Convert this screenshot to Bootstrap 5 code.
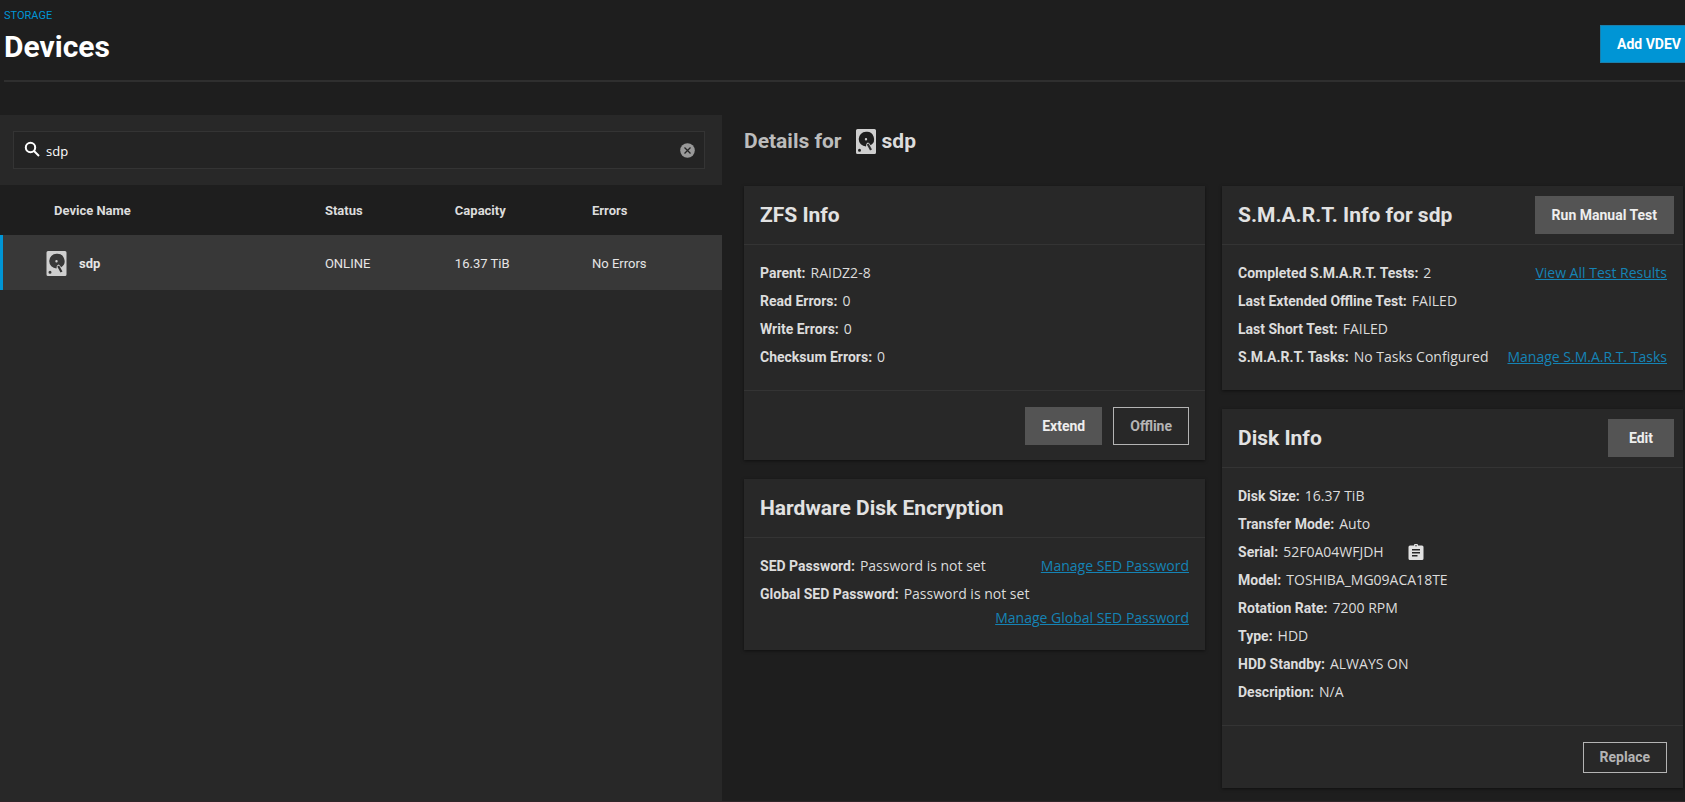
<!doctype html>
<html lang="en">
<head>
<meta charset="utf-8">
<meta name="viewport" content="width=device-width, initial-scale=1">
<title>Devices</title>
<link href="https://cdn.jsdelivr.net/npm/bootstrap@5.3.0/dist/css/bootstrap.min.css" rel="stylesheet">
<style>
  :root { --page: #1e1e1e; --panel: #282828; --line: #343434; --accent: #0095d5; --ink: #dcdcdc; --strong-font: Roboto, "Liberation Sans", sans-serif; }
  body { background: var(--page); color: var(--ink); font: 14px/28px "Open Sans", "Liberation Sans", sans-serif; }
  h1, h2, h3, .strong, .btn, th { font-family: var(--strong-font); font-weight: 700; }
  svg { display: block; flex: none; }
  .shell { min-height: 100vh; border-bottom: 1px solid #2f2529; }

  .page-head { border-bottom: 2px solid #2f2f2f; padding-top: 9px; height: 82px; }
  .crumb { color: var(--accent); font: 11px/14px var(--strong-font); text-decoration: none; display: block; }
  h1 { font-size: 30px; line-height: 36px; color: #fff; margin: 6px 0 0; }

  .btn { --bs-btn-font-size: 14px; --bs-btn-line-height: 20px; --bs-btn-padding-y: 8px; --bs-btn-padding-x: 16px; --bs-btn-border-radius: 0; --bs-btn-font-weight: 700; }
  .btn-main { --bs-btn-bg: var(--accent); --bs-btn-color: #fff; --bs-btn-border-color: #1b7fac; --bs-btn-hover-bg: #0aa5e8; --bs-btn-hover-color: #fff; }
  .btn-grey { --bs-btn-bg: #545454; --bs-btn-color: #eee; --bs-btn-border-color: #545454; --bs-btn-hover-bg: #666; --bs-btn-hover-color: #fff; }
  .btn-line { --bs-btn-color: #b4b4b4; --bs-btn-border-color: #b4b4b4; --bs-btn-hover-bg: #3a3a3a; --bs-btn-hover-color: #fff; }
  .btn-short { --bs-btn-line-height: 21px; --bs-btn-padding-y: 4px; }
  .btn-edit { --bs-btn-padding-x: 20px; }

  .main-area { padding-top: 33px; }
  .list-side { flex: 0 0 42.85%; max-width: 42.85%; background: var(--panel); }
  .search-zone { padding: 16px 17px 16px 13px; }
  .search-box { height: 38px; border: 1px solid var(--line); background: #242424; padding: 0 9px 0 10px; }
  .search-box input { font: 13px/20px "Open Sans", sans-serif; color: #fff; background: none; border: 0; outline: 0; min-width: 0; padding: 2px 0 0 4px; }
  .clear-btn { background: none; border: 0; padding: 0; }

  .device-table { width: 100%; table-layout: fixed; border-collapse: separate; border-spacing: 0; font: 13px/20px var(--strong-font); }
  .device-table th { background: var(--page); height: 50px; color: var(--ink); padding: 2px 0 0; }
  .device-table td { background: #383838; height: 55px; color: #e6e6e6; padding: 2px 0 0; }
  .device-table th:first-child { padding-left: 54px; }
  .device-table td:first-child { padding-left: 43px; border-left: 3px solid var(--accent); }

  .detail-side { padding: 0 2px 0 22px; }
  .detail-title { font-size: 21px; line-height: 28px; margin: 12px 0 31px; color: #bcbcbc; }
  .detail-title span { color: var(--ink); }
  .detail-cols { gap: 17px; }
  .detail-col { flex: 1 1 0; min-width: 0; gap: 19px; }
  .tile { background: var(--panel); box-shadow: 0 1px 3px rgba(0,0,0,.5); }
  .tile-head { height: 59px; padding: 0 9px 0 16px; border-bottom: 1px solid var(--line); }
  .tile-head h3 { font-size: 21px; line-height: 28px; margin: 0; color: #e2e2e2; }
  .tile-body { padding: 14px 16px 19px; }
  .tile-foot { border-top: 1px solid var(--line); padding: 16px 16px 15px; gap: 11px; }
  .strong { margin-right: 5px; }
  .tile-body a { color: #1583b5; }
  .link-row { line-height: 20px; padding-bottom: 3px; }
</style>
</head>
<body>
<svg width="0" height="0" class="position-absolute" aria-hidden="true">
  <symbol id="disk" viewBox="0 0 20 25">
    <path fill="#cfcfcf" fill-rule="evenodd" d="M1.500 0h17A1.500 1.500 0 0 1 20 1.500v22a1.500 1.500 0 0 1-1.500 1.500h-17A1.500 1.500 0 0 1 0 23.500v-22A1.500 1.500 0 0 1 1.500 0zM10 2.800a7.300 7.300 0 1 0 0 14.600l.3-2.500 1.500-1.300 1.200.3 1.700 2.300A7.300 7.300 0 0 0 10 2.800zm0 6.300a1.200 1.200 0 1 1 0 2.400 1.200 1.200 0 0 1 0-2.400zM3.500 19.700a1.500 1.500 0 1 0 0 3 1.500 1.500 0 0 0 0-3z"/>
    <path stroke="#303030" stroke-width="2.200" d="M11.700 15l3.300 6"/>
  </symbol>
</svg>
<div class="shell d-flex flex-column">
  <header class="page-head d-flex justify-content-between align-items-start ms-1">
    <div>
      <a class="crumb" href="#">STORAGE</a>
      <h1>Devices</h1>
    </div>
    <div class="pt-3"><button class="btn btn-main pe-1 border-end-0" type="button">Add VDEV</button></div>
  </header>

  <main class="main-area d-flex flex-grow-1">
    <section class="list-side">
      <div class="search-zone">
        <div class="search-box d-flex align-items-center">
          <svg width="18" height="18" viewBox="0 0 18 18" fill="none" stroke="#fff" stroke-width="2" aria-hidden="true"><circle cx="6.500" cy="6.500" r="4.700"/><path d="M10 10l5 5"/></svg>
          <input class="flex-grow-1" type="text" value="sdp" aria-label="Search devices">
          <button class="clear-btn" type="button" aria-label="Clear search"><svg width="15" height="15" viewBox="0 0 15 15"><circle cx="7.500" cy="7.500" r="7.300" fill="#999"/><path d="M4.500 4.500l6 6m0-6l-6 6" stroke="#242424" stroke-width="1.300"/></svg></button>
        </div>
      </div>
      <table class="device-table">
        <colgroup><col style="width:45%"><col style="width:18%"><col style="width:19%"><col style="width:18%"></colgroup>
        <thead><tr><th>Device Name</th><th>Status</th><th>Capacity</th><th>Errors</th></tr></thead>
        <tbody><tr>
          <td><div class="d-flex align-items-center"><svg width="21" height="25" aria-hidden="true" preserveAspectRatio="none"><use href="#disk"/></svg><b class="ms-2 ps-1">sdp</b></div></td>
          <td>ONLINE</td><td>16.37 TiB</td><td>No Errors</td>
        </tr></tbody>
      </table>
    </section>

    <section class="detail-side flex-grow-1">
      <h2 class="detail-title d-flex align-items-center">Details for <svg class="ms-2 me-1 ps-1" width="28" height="25" aria-hidden="true"><use href="#disk"/></svg> <span>sdp</span></h2>
      <div class="detail-cols d-flex align-items-start">
        <div class="detail-col d-flex flex-column">
          <article class="tile">
            <div class="tile-head d-flex align-items-center"><h3>ZFS Info</h3></div>
            <div class="tile-body">
              <div><span class="strong">Parent:</span>RAIDZ2-8</div>
              <div><span class="strong">Read Errors:</span>0</div>
              <div><span class="strong">Write Errors:</span>0</div>
              <div><span class="strong">Checksum Errors:</span>0</div>
            </div>
            <div class="tile-foot d-flex justify-content-end">
              <button class="btn btn-grey" type="button">Extend</button>
              <button class="btn btn-line" type="button">Offline</button>
            </div>
          </article>
          <article class="tile">
            <div class="tile-head d-flex align-items-center"><h3>Hardware Disk Encryption</h3></div>
            <div class="tile-body">
              <div class="d-flex justify-content-between"><div><span class="strong">SED Password:</span>Password is not set</div><a href="#">Manage SED Password</a></div>
              <div><span class="strong">Global SED Password:</span>Password is not set</div>
              <div class="link-row text-end"><a href="#">Manage Global SED Password</a></div>
            </div>
          </article>
        </div>
        <div class="detail-col d-flex flex-column">
          <article class="tile">
            <div class="tile-head d-flex align-items-center justify-content-between"><h3>S.M.A.R.T. Info for sdp</h3><button class="btn btn-grey" type="button">Run Manual Test</button></div>
            <div class="tile-body">
              <div class="d-flex justify-content-between"><div><span class="strong">Completed S.M.A.R.T. Tests:</span>2</div><a href="#">View All Test Results</a></div>
              <div><span class="strong">Last Extended Offline Test:</span>FAILED</div>
              <div><span class="strong">Last Short Test:</span>FAILED</div>
              <div class="d-flex justify-content-between"><div><span class="strong">S.M.A.R.T. Tasks:</span>No Tasks Configured</div><a href="#">Manage S.M.A.R.T. Tasks</a></div>
            </div>
          </article>
          <article class="tile">
            <div class="tile-head d-flex align-items-center justify-content-between"><h3>Disk Info</h3><button class="btn btn-grey btn-edit" type="button">Edit</button></div>
            <div class="tile-body">
              <div><span class="strong">Disk Size:</span>16.37 TiB</div>
              <div><span class="strong">Transfer Mode:</span>Auto</div>
              <div class="d-flex align-items-center"><span class="strong">Serial:</span>52F0A04WFJDH
                <button class="clear-btn ms-4" type="button" aria-label="Copy serial"><svg width="16" height="16" viewBox="0 0 16 16"><path fill="#e2e2e2" fill-rule="evenodd" d="M2 1.500h4a2 2 0 0 1 4 0h4A1.500 1.500 0 0 1 15.500 3v11.500A1.500 1.500 0 0 1 14 16H2A1.500 1.500 0 0 1 .5 14.500V3A1.500 1.500 0 0 1 2 1.500zM8 1a.7.7 0 1 0 0 1.400A.7.7 0 0 0 8 1zM4 5v1.500h8V5zm0 3v1.500h8V8zm0 3v1.500h5.500V11z"/></svg></button></div>
              <div><span class="strong">Model:</span>TOSHIBA_MG09ACA18TE</div>
              <div><span class="strong">Rotation Rate:</span>7200 RPM</div>
              <div><span class="strong">Type:</span>HDD</div>
              <div><span class="strong">HDD Standby:</span>ALWAYS ON</div>
              <div><span class="strong">Description:</span>N/A</div>
            </div>
            <div class="tile-foot d-flex justify-content-end"><button class="btn btn-line btn-short" type="button">Replace</button></div>
          </article>
        </div>
      </div>
    </section>
  </main>
</div>
<script src="https://cdn.jsdelivr.net/npm/bootstrap@5.3.0/dist/js/bootstrap.bundle.min.js"></script>
</body>
</html>
